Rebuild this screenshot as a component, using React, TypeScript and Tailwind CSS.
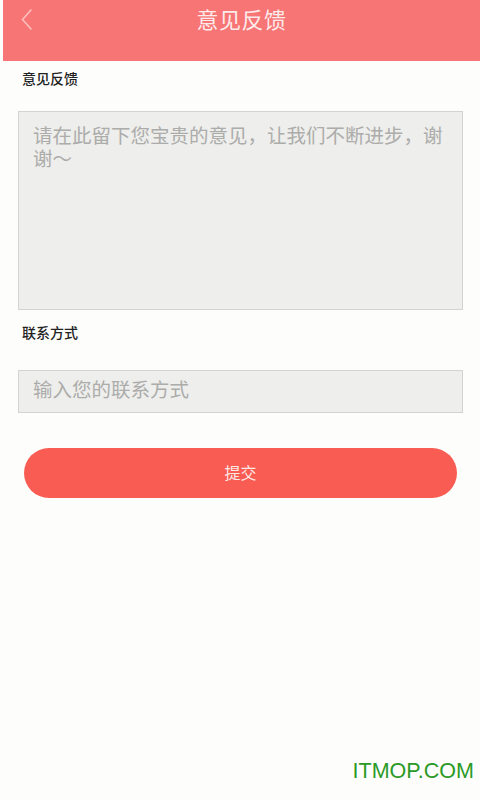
import React from "react";

export default function App() {
  const cjk = { fontFamily: '"Noto Sans CJK SC", "Noto Sans", sans-serif' };
  return (
    <div className="w-[480px] h-[800px] bg-[#fdfdfb] flex flex-col relative overflow-hidden" style={cjk}>
      <div className="h-[61px] ml-[3px] bg-[#f77574] flex items-center justify-center relative shrink-0">
        <svg className="absolute left-[16px] top-[7px]" width="16" height="26" viewBox="0 0 16 26" fill="none">
          <path d="M12 3 L3.5 12.5 L12 22" stroke="#fbc0bf" strokeWidth="1.6" strokeLinecap="round" strokeLinejoin="round" />
        </svg>
        <span className="text-[22px] leading-none text-[#fdeaea] -mt-[26px] tracking-[0.5px]">意见反馈</span>
      </div>
      <div className="flex flex-col pl-[18px] pr-[17px]">
        <div className="pl-[4px] pt-[8px] text-[14px] leading-[18px] text-[#222] font-medium">意见反馈</div>
        <div className="mt-[24px] h-[199px] bg-[#eeeeec] border-[1.5px] border-[#d3d3d1] pl-[14px] pr-[8px] pt-[11px] text-[19.5px] leading-[23px] text-[#acacaa]">
          请在此留下您宝贵的意见，让我们不断进步，谢谢～
        </div>
        <div className="pl-[4px] mt-[13px] text-[14px] leading-[18px] text-[#222] font-medium">联系方式</div>
        <div className="mt-[29px] h-[43px] bg-[#eeeeec] border-[1.5px] border-[#d3d3d1] pl-[14px] flex items-center text-[19.5px] text-[#acacaa] leading-none pb-[6px]">
          输入您的联系方式
        </div>
        <div className="mt-[35px] mx-[6px] h-[50px] rounded-full bg-[#f95c52] flex items-center justify-center text-[16px] text-[#fde8e6] pb-[3px]">
          提交
        </div>
      </div>
      <div className="absolute right-[6px] top-[761px] text-[21.5px] leading-none text-[#2a9a26]" style={{ fontFamily: '"Liberation Sans", Arial, sans-serif' }}>
        ITMOP.COM
      </div>
    </div>
  );
}
